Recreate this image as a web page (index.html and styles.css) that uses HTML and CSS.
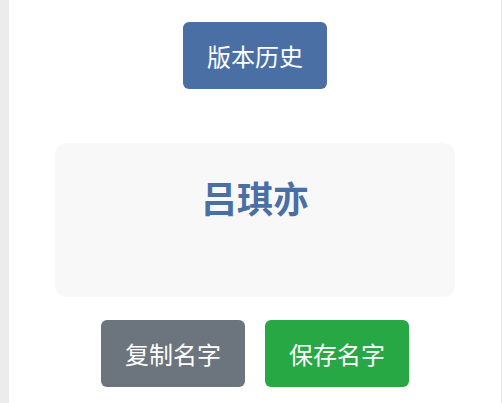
FILE: index.html
```html
<!DOCTYPE html>
<html lang="zh-CN">
<head>
    <meta charset="UTF-8">
    <meta name="viewport" content="width=device-width, initial-scale=1.0">
    <title>名字生成</title>
    <link rel="stylesheet" href="styles.css">
</head>
<body>
    <div class="container">
        <button class="btn btn-history">版本历史</button>
        <div class="name-card">
            <div class="name-text">吕琪亦</div>
        </div>
        <div class="actions">
            <button class="btn btn-copy">复制名字</button>
            <button class="btn btn-save">保存名字</button>
        </div>
    </div>
</body>
</html>
```

FILE: styles.css
```css
body {
    margin: 0;
    background: #ececec;
    font-family: "Noto Sans CJK SC", "Noto Sans", sans-serif;
}
.container {
    background: white;
    margin: 0 1px 0 9px;
    min-height: 100vh;
    padding-top: 22px;
    box-sizing: border-box;
    display: flex;
    flex-direction: column;
    align-items: center;
}
.btn {
    font-family: inherit;
    font-size: 24px;
    line-height: 37px;
    color: white;
    border: none;
    border-radius: 6px;
    padding: 15px 24px;
    cursor: pointer;
}
.btn-history {
    background-color: #4a6fa5;
}
.name-card {
    margin-top: 54px;
    width: 400px;
    height: 154px;
    box-sizing: border-box;
    background: #f8f8f8;
    border-radius: 12px;
    padding-top: 27px;
    text-align: center;
}
.name-text {
    font-size: 36px;
    font-weight: bold;
    line-height: 54px;
    color: #4a6fa5;
}
.actions {
    margin-top: 23px;
    display: flex;
    gap: 20px;
}
.btn-copy {
    background-color: #6c757d;
}
.btn-save {
    background-color: #28a745;
}
```
